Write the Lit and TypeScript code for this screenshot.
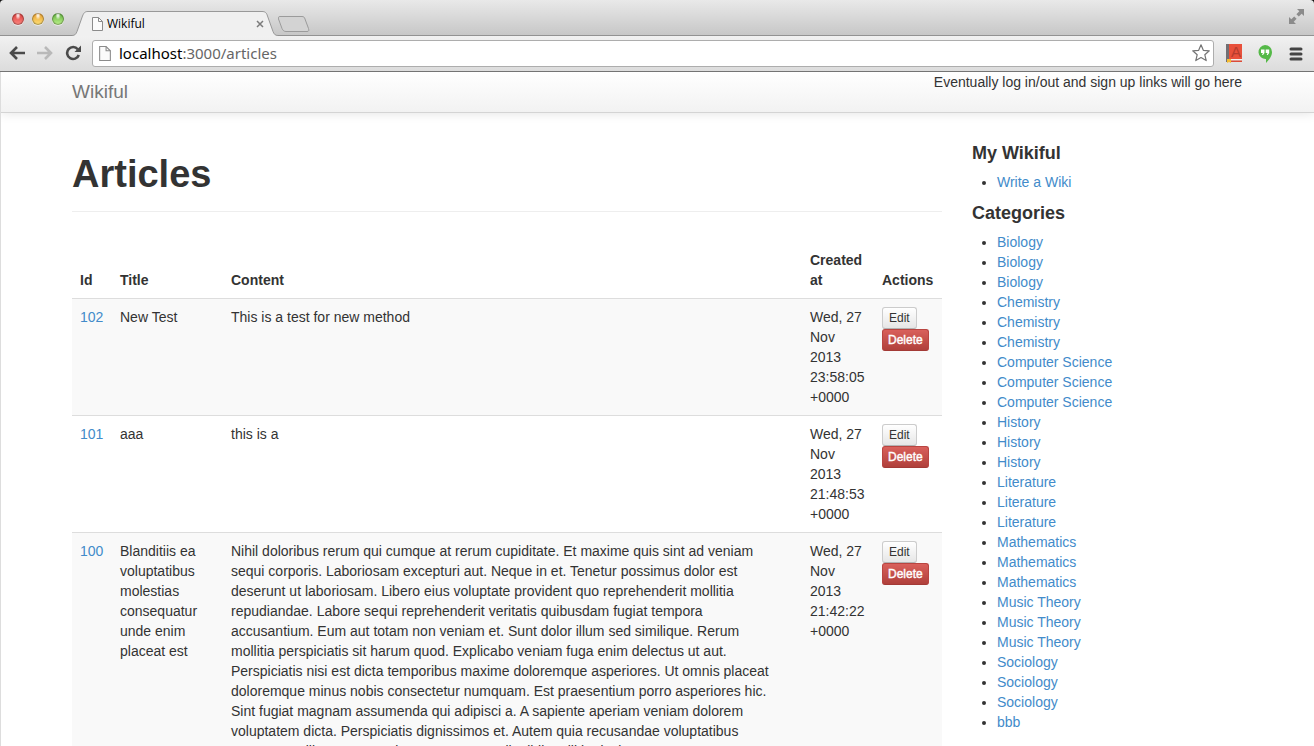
import { LitElement, html, css, svg } from "lit";
import { customElement } from "lit/decorators.js";

interface Article {
  id: number;
  title: string;
  content: string;
  created: string;
}

const articles: Article[] = [
  { id: 102, title: "New Test", content: "This is a test for new method", created: "Wed, 27 Nov 2013 23:58:05 +0000" },
  { id: 101, title: "aaa", content: "this is a", created: "Wed, 27 Nov 2013 21:48:53 +0000" },
  {
    id: 100,
    title: "Blanditiis ea voluptatibus molestias consequatur unde enim placeat est",
    content:
      "Nihil doloribus rerum qui cumque at rerum cupiditate. Et maxime quis sint ad veniam sequi corporis. Laboriosam excepturi aut. Neque in et. Tenetur possimus dolor est deserunt ut laboriosam. Libero eius voluptate provident quo reprehenderit mollitia repudiandae. Labore sequi reprehenderit veritatis quibusdam fugiat tempora accusantium. Eum aut totam non veniam et. Sunt dolor illum sed similique. Rerum mollitia perspiciatis sit harum quod. Explicabo veniam fuga enim delectus ut aut. Perspiciatis nisi est dicta temporibus maxime doloremque asperiores. Ut omnis placeat doloremque minus nobis consectetur numquam. Est praesentium porro asperiores hic. Sint fugiat magnam assumenda qui adipisci a. A sapiente aperiam veniam dolorem voluptatem dicta. Perspiciatis dignissimos et. Autem quia recusandae voluptatibus accusamus illo nemo possimus. Tempore velit nihil mollitia ducimus.",
    created: "Wed, 27 Nov 2013 21:42:22 +0000",
  },
];

const categories = [
  ...["Biology", "Chemistry", "Computer Science", "History", "Literature", "Mathematics", "Music Theory", "Sociology"].flatMap(
    (name) => [name, name, name],
  ),
  "bbb",
];

const pageIcon = svg`
  <path d="M.5.5h6l4 4v9H.5z" fill="#fbfbfb" stroke="#8b8b8b"/>
  <path d="M6.500.5v4h4" fill="none" stroke="#8b8b8b"/>`;

@customElement("browser-bar")
export class BrowserBar extends LitElement {
  static styles = css`
    :host {
      display: block;
      flex: none;
      background: #111;
    }
    svg {
      display: block;
    }
    button {
      border: 0;
      padding: 0;
      background: none;
      flex: none;
    }
    .tabs {
      display: flex;
      align-items: flex-end;
      height: 36px;
      border-radius: 4px 4px 0 0;
      background: linear-gradient(#e9e9e9, #c6c6c6);
      box-shadow: inset 0 -1px #929292;
    }
    .lights {
      display: flex;
      gap: 8px;
      padding: 0 8px 11px 12px;
    }
    .light {
      width: 12px;
      height: 12px;
      border-radius: 50%;
      box-shadow: inset 0 0 1px 1px rgba(0, 0, 0, 0.35), 0 1px 0 rgba(255, 255, 255, 0.5);
    }
    .red {
      background: radial-gradient(ellipse at 50% 20%, rgba(255, 255, 255, 0.8) 0 8%, transparent 32%),
        linear-gradient(#d93a38, #ff8983);
    }
    .amber {
      background: radial-gradient(ellipse at 50% 20%, rgba(255, 255, 255, 0.8) 0 8%, transparent 32%),
        linear-gradient(#e89b2a, #ffe37a);
    }
    .green {
      background: radial-gradient(ellipse at 50% 20%, rgba(255, 255, 255, 0.8) 0 8%, transparent 32%),
        linear-gradient(#5cae3a, #c1f58e);
    }
    .tab {
      display: grid;
      width: 206px;
      height: 25px;
    }
    .tab > * {
      grid-area: 1 / 1;
    }
    .tab-label {
      display: flex;
      align-items: center;
      gap: 4px;
      padding: 0 14px 0 20px;
      font: 12px/16px "Open Sans", "Noto Sans", sans-serif;
      color: #000;
    }
    .tab-label span {
      flex: 1;
    }
    .new-tab {
      padding-bottom: 4px;
    }
    .resize {
      margin: 0 10px 12px auto;
    }
    .tools {
      display: flex;
      align-items: center;
      height: 35px;
      padding: 0 11px 0 9px;
      background: linear-gradient(#f1f1f1, #dcdcdc);
      border-bottom: 1px solid #747474;
    }
    .nav {
      display: flex;
      gap: 12px;
      padding: 0 11px 2px 0;
    }
    .address {
      flex: 1;
      display: flex;
      align-items: center;
      gap: 8px;
      height: 24px;
      padding: 0 3px 1px 6px;
      border: 1px solid #adadad;
      border-radius: 3px;
      background: #fff;
      font: 15px/20px "Noto Sans", sans-serif;
      color: #666;
    }
    .url {
      flex: 1;
    }
    .host {
      color: #000;
    }
    .extras {
      display: flex;
      align-items: center;
      gap: 16px;
      padding-left: 12px;
    }
    .letter {
      font: 15px "Liberation Sans", sans-serif;
    }
  `;

  render() {
    return html`
      <div class="tabs">
        <div class="lights">
          <button class="light red" aria-label="Close window"></button>
          <button class="light amber" aria-label="Minimize window"></button>
          <button class="light green" aria-label="Zoom window"></button>
        </div>
        <div class="tab">
          <svg width="206" height="25" viewBox="0 0 206 25">
            <path
              d="M0 24.500C3 24.500 4 23 5 20.500L10.500 5C12 1.500 13 .5 16 .5H190C193 .5 194.500 1.500 195.500 5L201 20.500C202 23 203 24.500 206 24.500V25H0Z"
              fill="#f0f0f0"
            />
            <path
              d="M0 24.500C3 24.500 4 23 5 20.500L10.500 5C12 1.500 13 .5 16 .5H190C193 .5 194.500 1.500 195.500 5L201 20.500C202 23 203 24.500 206 24.500"
              fill="none"
              stroke="#999"
            />
          </svg>
          <div class="tab-label">
            <svg width="11" height="14" viewBox="0 0 11 14">${pageIcon}</svg>
            <span>Wikiful</span>
            <button aria-label="Close tab">
              <svg width="8" height="8" viewBox="0 0 8 8">
                <path d="M1 1l6 6M7 1l-6 6" stroke="#7b7b7b" stroke-width="1.500" />
              </svg>
            </button>
          </div>
        </div>
        <button class="new-tab" aria-label="New tab">
          <svg width="32" height="16" viewBox="1 0 32 16">
            <path
              d="M3 .5H25C27 .5 27.500 1.500 28 3L31.500 12.500C32 14.500 32 15.500 30 15.500H9C7 15.500 6 14.500 5 12.500L1.500 3C1 1.500 1.500.5 3 .5Z"
              fill="#d3d3d3"
              stroke="#9b9b9b"
            />
          </svg>
        </button>
        <button class="resize" aria-label="Full screen">
          <svg width="15" height="15" viewBox="0 0 15 15" fill="#8b8b8b">
            <path d="M8 0h7v7l-2.300-2.300L9.800 7.600 7.400 5.200l2.900-2.900z" />
            <path d="M0 8l2.300 2.300L5.200 7.400 7.600 9.800l-2.900 2.900L7 15H0z" />
          </svg>
        </button>
      </div>
      <div class="tools">
        <div class="nav">
          <button aria-label="Back">
            <svg width="16" height="16" viewBox="0 0 16 16" fill="none" stroke="#4b4b4b" stroke-width="2.600">
              <path d="M8 2L2 8l6 6M2 8h14" />
            </svg>
          </button>
          <button aria-label="Forward">
            <svg width="16" height="16" viewBox="0 0 16 16" fill="none" stroke="#b9b9b9" stroke-width="2.600">
              <path d="M8 2l6 6-6 6M14 8H0" />
            </svg>
          </button>
          <button aria-label="Reload">
            <svg width="16" height="16" viewBox="0 0 16 16">
              <path d="M12.800 4.200A6 6 0 1 0 13.800 10" fill="none" stroke="#4b4b4b" stroke-width="2.600" />
              <path d="M16 .5V7H9.500z" fill="#4b4b4b" />
            </svg>
          </button>
        </div>
        <div class="address">
          <svg width="12" height="15" viewBox="0 0 11 14">${pageIcon}</svg>
          <span class="url"><span class="host">localhost</span>:3000/articles</span>
          <button aria-label="Bookmark this page">
            <svg width="18" height="18" viewBox="0 0 18 18">
              <path
                d="M9 .8l2.300 5.500 6 .5-4.500 3.900 1.400 5.900L9 13.500l-5.200 3.100 1.400-5.900L.7 6.800l6-.5z"
                fill="#fff"
                stroke="#747474"
                stroke-width="1.200"
                stroke-linejoin="round"
              />
            </svg>
          </button>
        </div>
        <div class="extras">
          <button aria-label="Dictionary">
            <svg width="16" height="19" viewBox="0 0 16 19">
              <path d="M0 0h4v18H0z" fill="#716f73" />
              <path d="M3 0h13v15H3z" fill="#e8503b" />
              <path d="M3 15h13v1H3z" fill="#f6f0ee" />
              <path d="M4 16.500h12v1.500H4z" fill="#dd4b37" />
              <path d="M1 15h4v4l-2-1-2 1z" fill="#f5bd33" />
              <text class="letter" x="5" y="13" fill="#b53c2e">A</text>
            </svg>
          </button>
          <button aria-label="Hangouts">
            <svg width="14" height="18" viewBox="0 0 14 18">
              <path d="M7 0a7 7 0 0 1 7 7c0 4.500-3.500 8.500-6 11v-4A7 7 0 1 1 7 0z" fill="#55b948" />
              <path d="M3 4.500h3.500v3.500l-1.500 2H4l.8-2H3zM7.700 4.500h3.500v3.500l-1.500 2h-1l.8-2H7.700z" fill="#fff" />
            </svg>
          </button>
          <button aria-label="Menu">
            <svg width="15" height="14" viewBox="0 0 15 14" stroke="#444" stroke-width="3" stroke-linecap="round">
              <path d="M3 2h10M3 7h10M3 12h10" />
            </svg>
          </button>
        </div>
      </div>
    `;
  }
}

@customElement("app-root")
export class AppRoot extends LitElement {
  static styles = css`
    :host {
      display: flex;
      flex-direction: column;
      height: 100vh;
      overflow: hidden;
      background: #fff;
      font: 14px/20px "Liberation Sans", Arial, sans-serif;
      color: #333;
    }
    a {
      color: #428bca;
      text-decoration: none;
    }
    .page {
      flex: 1;
      min-height: 0;
      overflow: hidden;
      border: solid #ddd;
      border-width: 0 0 0 1px;
      padding-right: 1px;
    }
    .container {
      max-width: 1170px;
      margin: 0 auto;
    }
    .navbar {
      margin-right: -1px;
      padding-right: 1px;
      background: linear-gradient(#fff, #f2f2f2);
      border-bottom: 1px solid #d4d4d4;
      box-shadow: 0 1px 10px rgba(0, 0, 0, 0.1);
    }
    .navbar .container {
      display: flex;
      justify-content: space-between;
      height: 40px;
    }
    .brand {
      padding-top: 10px;
      font-size: 19px;
      color: #777;
    }
    .columns {
      display: grid;
      grid-template-columns: minmax(0, 29fr) minmax(0, 9fr);
      gap: 30px;
      padding-top: 30px;
    }
    h1 {
      margin: 0 0 30px;
      padding: 11px 0 17px;
      border-bottom: 1px solid #eee;
      font-size: 38px;
      line-height: 40px;
    }
    table {
      width: 100%;
      border-collapse: collapse;
      table-layout: fixed;
    }
    th,
    td {
      padding: 8px;
      text-align: left;
      vertical-align: top;
    }
    th {
      vertical-align: bottom;
    }
    td {
      border-top: 1px solid #ddd;
    }
    tbody tr:nth-child(odd) {
      background: #f9f9f9;
    }
    .content {
      padding-right: 20px;
    }
    .id {
      width: 24px;
    }
    .title {
      width: 95px;
    }
    .created {
      width: 56px;
    }
    .actions {
      width: 52px;
    }
    .buttons {
      display: flex;
      flex-direction: column;
      align-items: flex-start;
    }
    .btn {
      height: 22px;
      padding: 0 6px;
      border: 1px solid #bbb;
      border-color: #ccc #ccc #b3b3b3;
      border-radius: 3px;
      background: linear-gradient(#fff, #e6e6e6);
      font: 12px/20px "Liberation Sans", Arial, sans-serif;
      color: #333;
    }
    .danger {
      padding: 0 5px;
      border-color: #b94541 #b94541 #a33a36;
      background: linear-gradient(#d9605b, #b0403b);
      color: #fff;
      -webkit-text-stroke: 0.4px #fff;
    }
    h4 {
      margin: 0 0 9px;
      font-size: 18px;
      line-height: 20px;
    }
    ul {
      margin: 0 0 11px;
      padding: 0 0 0 25px;
    }
    @media (max-width: 900px) {
      .container {
        padding: 0 20px;
      }
    }
  `;

  render() {
    return html`
      <browser-bar></browser-bar>
      <div class="page">
        <nav class="navbar">
          <div class="container">
            <a class="brand" href="#">Wikiful</a>
            <span>Eventually log in/out and sign up links will go here</span>
          </div>
        </nav>
        <div class="container columns">
          <main>
            <h1>Articles</h1>
            <table>
              <thead>
                <tr>
                  <th class="id">Id</th>
                  <th class="title">Title</th>
                  <th>Content</th>
                  <th class="created">Created at</th>
                  <th class="actions">Actions</th>
                </tr>
              </thead>
              <tbody>
                ${articles.map(
                  (a) => html`
                    <tr>
                      <td><a href="#">${a.id}</a></td>
                      <td>${a.title}</td>
                      <td class="content">${a.content}</td>
                      <td>${a.created}</td>
                      <td>
                        <div class="buttons">
                          <button class="btn">Edit</button>
                          <button class="btn danger">Delete</button>
                        </div>
                      </td>
                    </tr>
                  `,
                )}
              </tbody>
            </table>
          </main>
          <aside>
            <h4>My Wikiful</h4>
            <ul>
              <li><a href="#">Write a Wiki</a></li>
            </ul>
            <h4>Categories</h4>
            <ul>
              ${categories.map((name) => html`<li><a href="#">${name}</a></li>`)}
            </ul>
            <h4>About Wikiful</h4>
          </aside>
        </div>
      </div>
    `;
  }
}
